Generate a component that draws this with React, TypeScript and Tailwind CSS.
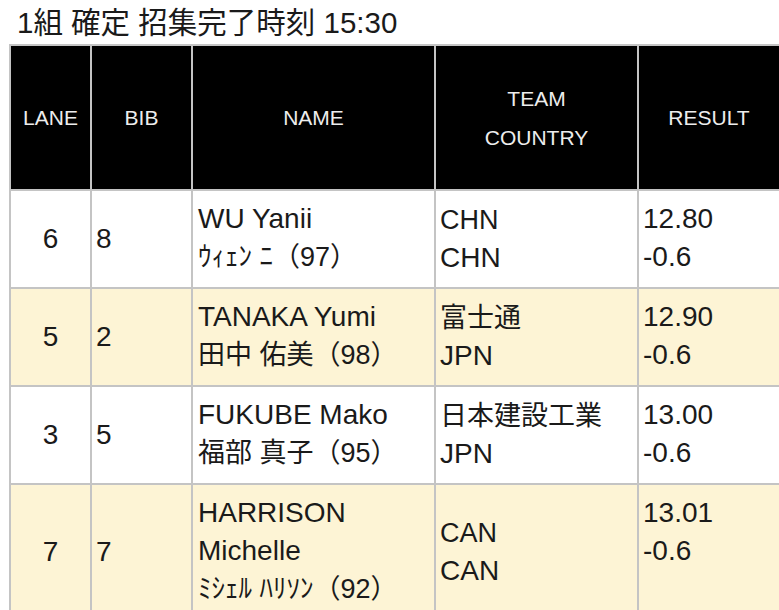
import React from "react";

type Row = {
  lane: string;
  bib: string;
  name: string[];
  reading: string;
  team: string;
  country: string;
  result: string;
  wind: string;
  alt: boolean;
};

const rows: Row[] = [
  { lane: "6", bib: "8", name: ["WU Yanii"], reading: "ｳｨｪﾝ ﾆ（97）", team: "CHN", country: "CHN", result: "12.80", wind: "-0.6", alt: false },
  { lane: "5", bib: "2", name: ["TANAKA Yumi"], reading: "田中 佑美（98）", team: "富士通", country: "JPN", result: "12.90", wind: "-0.6", alt: true },
  { lane: "3", bib: "5", name: ["FUKUBE Mako"], reading: "福部 真子（95）", team: "日本建設工業", country: "JPN", result: "13.00", wind: "-0.6", alt: false },
  { lane: "7", bib: "7", name: ["HARRISON", "Michelle"], reading: "ﾐｼｪﾙ ﾊﾘｿﾝ（92）", team: "CAN", country: "CAN", result: "13.01", wind: "-0.6", alt: true },
];

const font = { fontFamily: '"Liberation Sans", "Noto Sans CJK JP", sans-serif' };

export default function App() {
  return (
    <div className="w-[779px] h-[610px] overflow-hidden bg-white text-[#1a1a1a]" style={font}>
      <div className="pl-[17px] pt-[2px] h-[44px] text-[29.5px] leading-[42px] text-[#1a1a1a] whitespace-nowrap">
        1組 確定 招集完了時刻 15:30
      </div>
      <table className="ml-[9px] w-[770px] table-fixed border-collapse border-2 border-[#c4c4c4]">
        <colgroup>
          <col className="w-[81px]" />
          <col className="w-[101px]" />
          <col className="w-[243px]" />
          <col className="w-[203px]" />
          <col className="w-[142px]" />
        </colgroup>
        <thead>
          <tr className="bg-black text-[#ededed] text-[21px] leading-[39px] font-normal">
            <th className="h-[145px] border-2 border-[#c4c4c4] font-normal text-center align-middle">LANE</th>
            <th className="border-2 border-[#c4c4c4] font-normal text-center align-middle">BIB</th>
            <th className="border-2 border-[#c4c4c4] font-normal text-center align-middle">NAME</th>
            <th className="border-2 border-[#c4c4c4] font-normal text-center align-middle">
              TEAM
              <br />
              COUNTRY
            </th>
            <th className="border-2 border-[#c4c4c4] font-normal text-center align-middle">RESULT</th>
          </tr>
        </thead>
        <tbody className="text-[28px] leading-[38px]">
          {rows.map((r, i) => (
            <tr key={i} className={r.alt ? "bg-[#fdf4d5]" : "bg-white"}>
              <td className="border-2 border-[#c4c4c4] text-center align-middle">{r.lane}</td>
              <td className="border-2 border-[#c4c4c4] pl-[4px] align-middle">{r.bib}</td>
              <td className="border-2 border-[#c4c4c4] pl-[5px] pt-[9px] pb-[11px] align-top">
                {r.name.map((n, j) => (
                  <div key={j}>{n}</div>
                ))}
                <div className="text-[27px]">{r.reading}</div>
              </td>
              <td className="border-2 border-[#c4c4c4] pl-[4px] align-middle">
                <div className="text-[27px]">{r.team}</div>
                <div>{r.country}</div>
              </td>
              <td className="border-2 border-[#c4c4c4] pl-[4px] pt-[9px] align-top">
                <div>{r.result}</div>
                <div>{r.wind}</div>
              </td>
            </tr>
          ))}
        </tbody>
      </table>
    </div>
  );
}
